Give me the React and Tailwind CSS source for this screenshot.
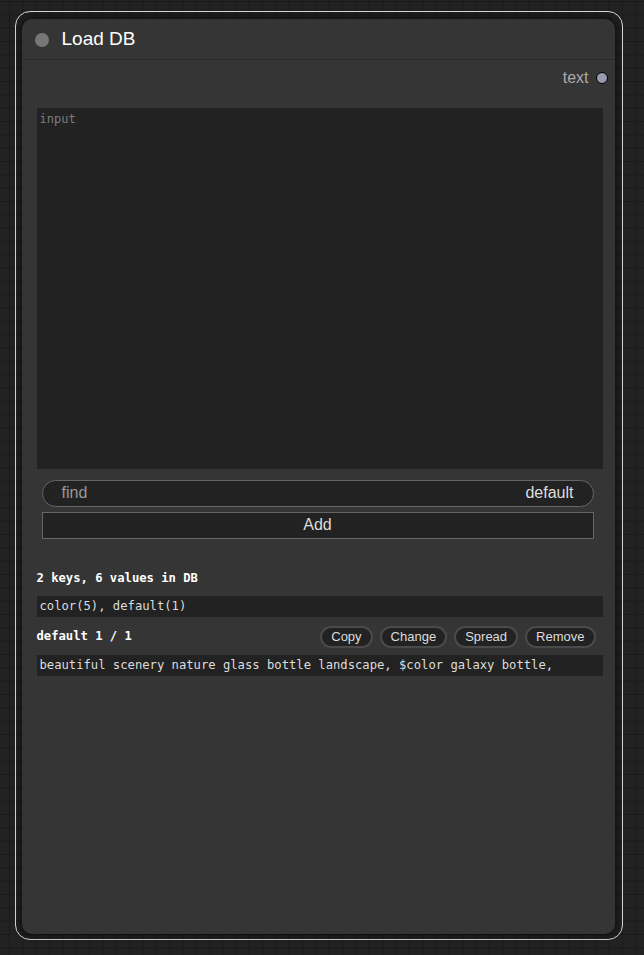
const mono = { fontFamily: '"DejaVu Sans Mono", "Liberation Mono", monospace' };

const PillButton = ({ label }) => (
  <button className="h-[22px] px-[9px] rounded-full border-2 border-[#4a4a4a] bg-[#222] text-[13px] text-[#ddd] leading-none">
    {label}
  </button>
);

export default function App() {
  return (
    <div
      className="w-[644px] h-[955px] bg-[#222] pl-[15px] pt-[11px] font-['Liberation_Sans',Arial,sans-serif] [background-image:linear-gradient(to_right,#1a1a1a_1px,transparent_1px),linear-gradient(to_bottom,#1a1a1a_1px,transparent_1px)] [background-size:13.333px_13.333px] [background-position:9px_1px]"
    >
      {/* selection outline */}
      <div className="w-[608px] h-[929px] rounded-[15px] border-[1.5px] border-[#dcdcdc] pl-[5.5px] pr-[7.5px] pt-[6.5px] pb-[5.5px]">
        {/* node body */}
        <div className="h-full rounded-[10px] bg-[#353535] shadow-[0_0_6px_3px_rgba(0,0,0,0.45)] flex flex-col">
          <div className="h-[41px] flex items-center border-b border-[#2b2b2b] pl-[13px] pt-[2px]">
            <span className="w-[14px] h-[14px] rounded-full bg-[#777]" />
            <span className="ml-[13px] text-[19px] text-white">Load DB</span>
          </div>

          <div className="flex flex-col pl-[15px] pr-[12px]">
            <div className="mt-[8px] h-[20px] flex items-center justify-end gap-[7px] -mr-[5px]">
              <span className="text-[16px] text-[#aaa]">text</span>
              <span className="w-[12px] h-[12px] rounded-full bg-[#9a9aae] border border-black" />
            </div>

            <div className="mt-[20px] h-[361px] bg-[#222] px-[3px] pt-[3px] text-[12px] leading-[16px] text-[#7d7d7d]" style={mono}>
              input
            </div>

            <div className="mt-[11px] ml-[5px] mr-[9px] h-[27px] rounded-full border border-[#666] bg-[#222] flex items-center justify-between pl-[19px] pr-[19px] text-[16px]">
              <span className="text-[#999]">find</span>
              <span className="text-[#ddd]">default</span>
            </div>

            <div className="mt-[5px] ml-[5px] mr-[9px] h-[27px] border border-[#666] bg-[#222] flex items-center justify-center text-[16px] text-[#ddd]">
              Add
            </div>

            <div className="mt-[32px] h-[16px] flex items-center text-[12.2px] font-bold text-white" style={mono}>
              2 keys, 6 values in DB
            </div>

            <div className="mt-[9px] h-[21px] bg-[#222] flex items-center px-[3px] text-[12.2px] text-[#ddd]" style={mono}>
              color(5), default(1)
            </div>

            <div className="mt-[9px] h-[22px] flex items-center justify-between pr-[7px]">
              <span className="text-[12.2px] font-bold text-white" style={mono}>default 1 / 1</span>
              <div className="flex gap-[7px]">
                <PillButton label="Copy" />
                <PillButton label="Change" />
                <PillButton label="Spread" />
                <PillButton label="Remove" />
              </div>
            </div>

            <div className="mt-[7px] h-[21px] bg-[#222] flex items-center px-[3px] text-[12.2px] text-[#ddd] whitespace-pre" style={mono}>
              beautiful scenery nature glass bottle landscape, $color galaxy bottle,
            </div>
          </div>
        </div>
      </div>
    </div>
  );
}
